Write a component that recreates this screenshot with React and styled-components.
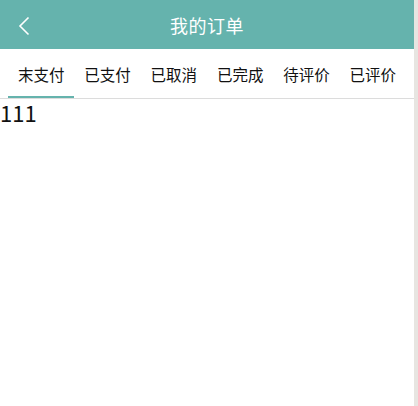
import React, { useState } from 'react'
import styled, { createGlobalStyle } from 'styled-components'

const GlobalStyle = createGlobalStyle`
  html, body {
    margin: 0;
    padding: 0;
    background: #fff;
  }
  body {
    font-family: "Microsoft YaHei", "Noto Sans CJK SC", "Noto Sans", sans-serif;
  }
`

const Page = styled.div`
  display: flex;
  width: 418px;
  height: 406px;
  overflow: hidden;
`

const Main = styled.div`
  flex: 1;
  display: flex;
  flex-direction: column;
  min-width: 0;
`

const ScrollTrack = styled.div`
  width: 4px;
  background: #e7e5e1;
`

const Header = styled.header`
  position: relative;
  height: 49px;
  background: #65b3ad;
  display: flex;
  align-items: center;
  justify-content: center;
`

const BackButton = styled.button`
  position: absolute;
  left: 14px;
  top: 15px;
  width: 20px;
  height: 22px;
  padding: 0;
  border: none;
  background: transparent;
  display: flex;
  align-items: center;
  justify-content: center;
  cursor: pointer;
`

const Title = styled.h1`
  margin: 0;
  font-size: 18px;
  font-weight: normal;
  color: #fff;
  letter-spacing: 0.5px;
`

const Tabs = styled.nav`
  display: flex;
  padding: 0 8px;
  height: 49px;
  border-bottom: 1px solid #dcdcdc;
`

const Tab = styled.div`
  flex: 1;
  display: flex;
  align-items: center;
  justify-content: center;
  font-size: 15.5px;
  color: #111;
  cursor: pointer;
  box-sizing: border-box;
  padding-top: 2px;
  border-bottom: 2px solid ${props => (props.active ? '#65b3ad' : 'transparent')};
`

const Content = styled.div`
  font-size: 22px;
  line-height: 26px;
  color: #111;
`

const tabs = ['末支付', '已支付', '已取消', '已完成', '待评价', '已评价']

function App () {
  const [active, setActive] = useState(0)
  return (
    <Page>
      <GlobalStyle />
      <Main>
        <Header>
          <BackButton aria-label='返回'>
            <svg width='12' height='20' viewBox='0 0 12 20'>
              <path d='M10.5 1.5 L2 10 L10.5 18.5' fill='none' stroke='#fff' strokeWidth='1.6' />
            </svg>
          </BackButton>
          <Title>我的订单</Title>
        </Header>
        <Tabs>
          {tabs.map((t, i) => (
            <Tab key={t} active={i === active} onClick={() => setActive(i)}>{t}</Tab>
          ))}
        </Tabs>
        <Content>111</Content>
      </Main>
      <ScrollTrack />
    </Page>
  )
}

export default App
